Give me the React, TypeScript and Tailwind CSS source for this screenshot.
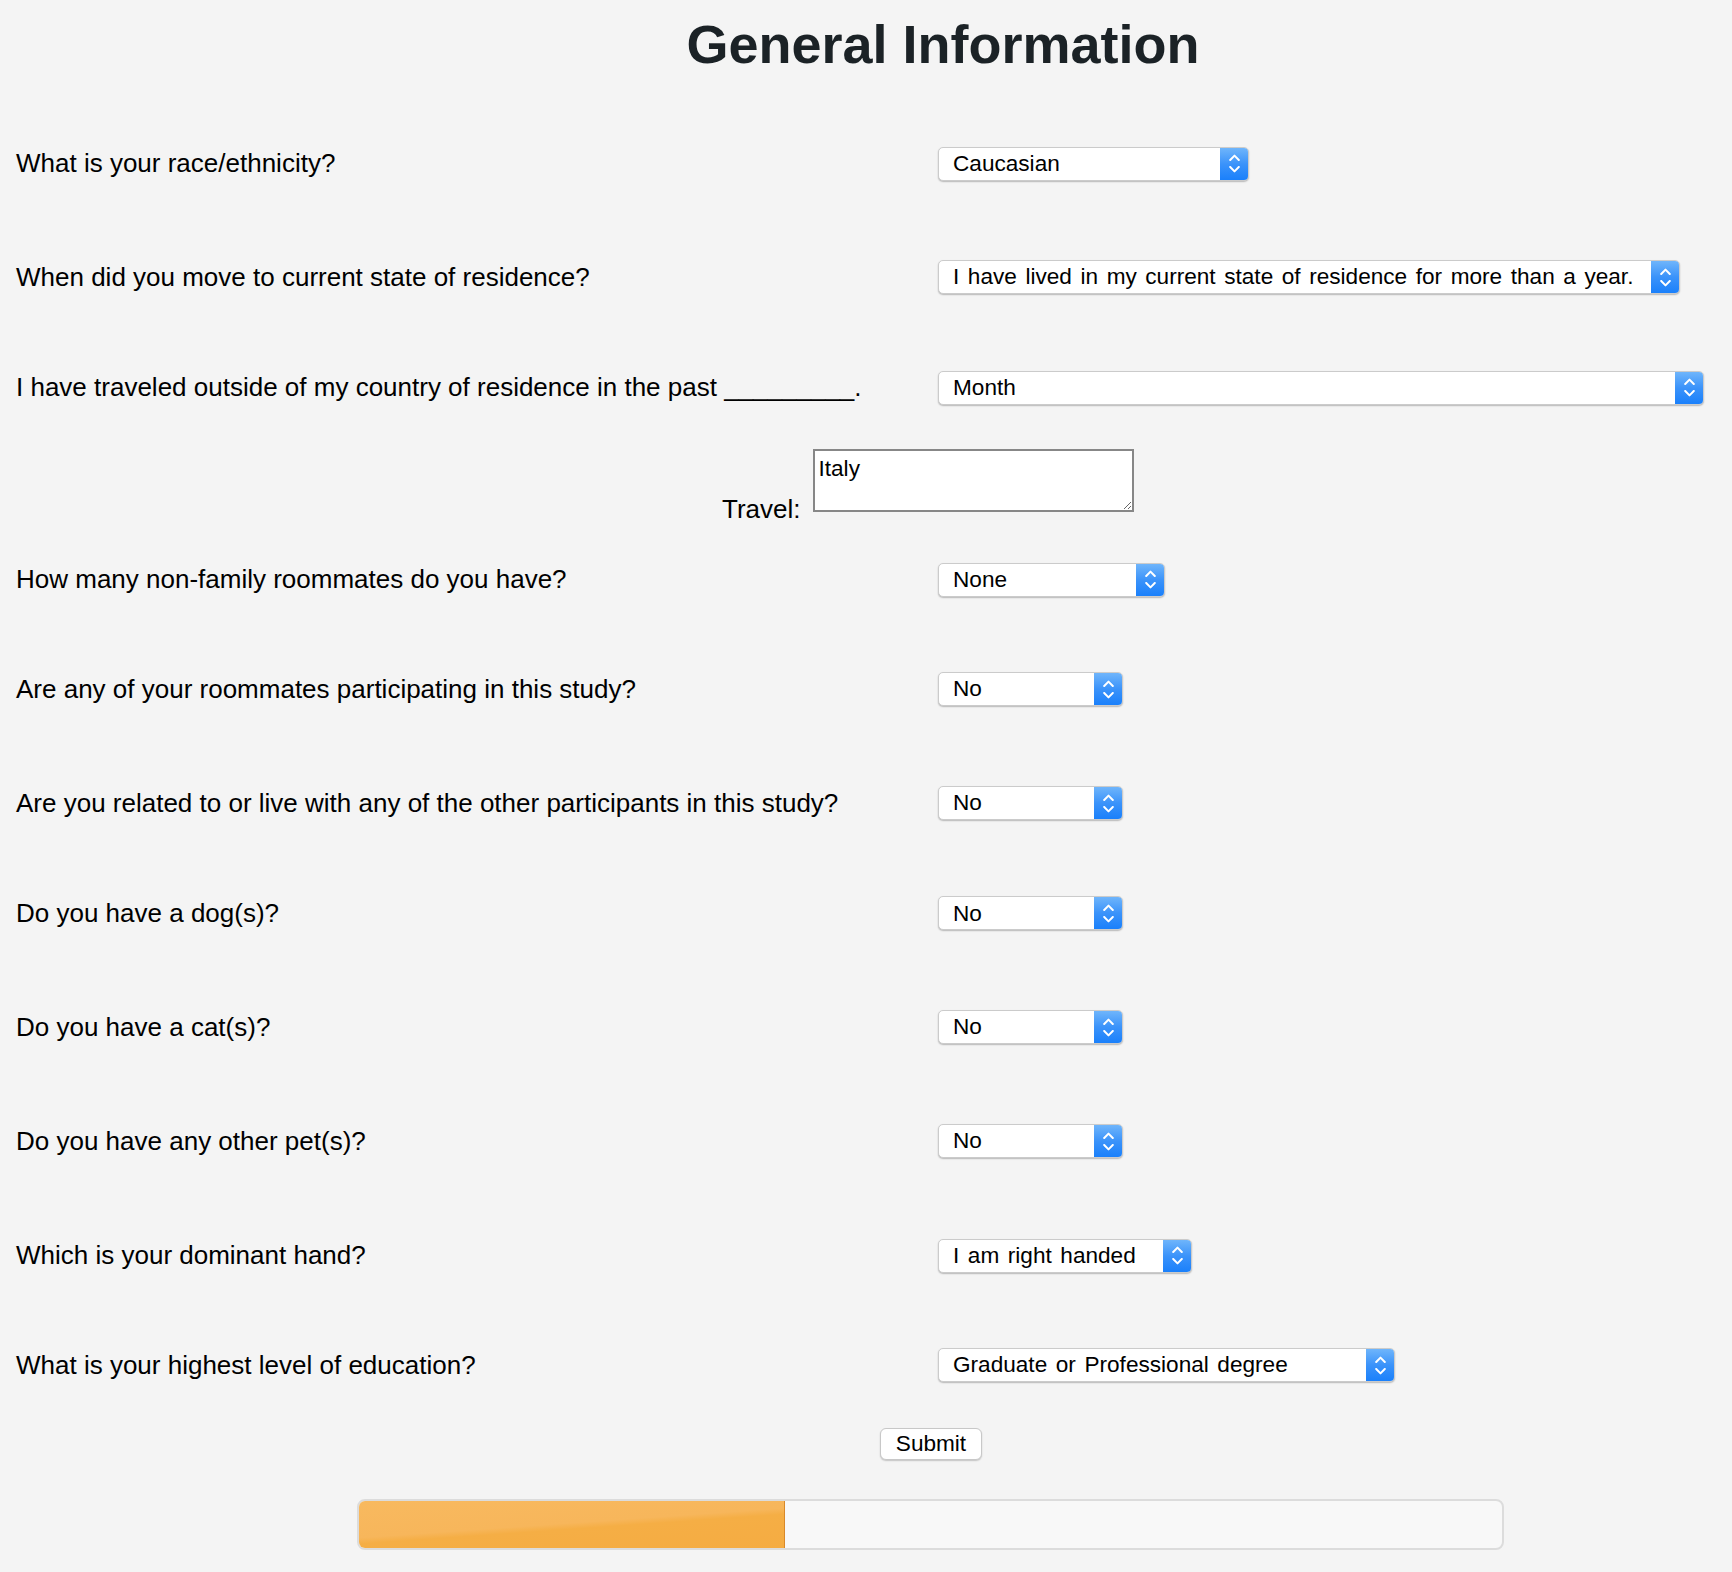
import React from 'react';

type Question = {
  label: string;
  value: string;
  width: string;
  gap: string;
};

const questions: Question[] = [
  { label: 'What is your race/ethnicity?', value: 'Caucasian', width: 'w-[311px]', gap: 'mt-0' },
  {
    label: 'When did you move to current state of residence?',
    value: 'I have lived in my current state of residence for more than a year.',
    width: 'w-[742px]',
    gap: 'mt-[53.8px]',
  },
  {
    label: 'I have traveled outside of my country of residence in the past _________.',
    value: 'Month',
    width: 'w-[766px]',
    gap: 'mt-[50.4px]',
  },
  { label: 'How many non-family roommates do you have?', value: 'None', width: 'w-[227px]', gap: 'mt-[25.9px]' },
  { label: 'Are any of your roommates participating in this study?', value: 'No', width: 'w-[185px]', gap: 'mt-[49.4px]' },
  {
    label: 'Are you related to or live with any of the other participants in this study?',
    value: 'No',
    width: 'w-[185px]',
    gap: 'mt-[53.8px]',
  },
  { label: 'Do you have a dog(s)?', value: 'No', width: 'w-[185px]', gap: 'mt-[50.4px]' },
  { label: 'Do you have a cat(s)?', value: 'No', width: 'w-[185px]', gap: 'mt-[53.8px]' },
  { label: 'Do you have any other pet(s)?', value: 'No', width: 'w-[185px]', gap: 'mt-[53.8px]' },
  { label: 'Which is your dominant hand?', value: 'I am right handed', width: 'w-[254px]', gap: 'mt-[54.9px]' },
  {
    label: 'What is your highest level of education?',
    value: 'Graduate or Professional degree',
    width: 'w-[457px]',
    gap: 'mt-[49.3px]',
  },
];

const progress = 0.373;

function FakeSelect({ value, width }: { value: string; width: string }) {
  return (
    <div
      className={`${width} h-[34px] flex bg-white rounded-[5px] border border-[#cbcbcb] shadow-[0_1px_1.5px_rgba(0,0,0,0.25)] overflow-hidden`}
    >
      <div className="flex-1 flex items-center pl-[14px] text-[22.6px] [word-spacing:2.3px] text-black whitespace-nowrap overflow-hidden">
        {value}
      </div>
      <div className="w-[28px] h-full flex flex-col items-center justify-center gap-[5px] bg-[linear-gradient(180deg,#6fb5fb_0%,#3b93fa_50%,#1a80fb_100%)]">
        <svg width="11" height="7" viewBox="0 0 11 7" fill="none">
          <path d="M1.2 6 L5.5 1.6 L9.8 6" stroke="white" strokeWidth="2" strokeLinecap="round" strokeLinejoin="round" />
        </svg>
        <svg width="11" height="7" viewBox="0 0 11 7" fill="none">
          <path d="M1.2 1 L5.5 5.4 L9.8 1" stroke="white" strokeWidth="2" strokeLinecap="round" strokeLinejoin="round" />
        </svg>
      </div>
    </div>
  );
}

function QuestionRow({ q }: { q: Question }) {
  return (
    <div className={`${q.gap} h-[60px] flex items-center pl-[16px]`}>
      <div className="w-[922px] shrink-0 text-[26px] text-black whitespace-nowrap">{q.label}</div>
      <FakeSelect value={q.value} width={q.width} />
    </div>
  );
}

export default function App() {
  return (
    <div
      className="w-[1732px] min-h-[1572px] bg-[#f4f4f4] text-black"
      style={{ fontFamily: '"Liberation Sans", Arial, Helvetica, sans-serif' }}
    >
      {/* Title */}
      <div className="h-[133.5px] pt-[17px] pl-[154px] text-center">
        <h1 className="text-[54px] font-bold leading-none text-[#1b2226]">General Information</h1>
      </div>

      {/* Questions */}
      {questions.slice(0, 3).map((q, i) => (
        <QuestionRow key={i} q={q} />
      ))}

      {/* Travel */}
      <div className="mt-[26.3px] h-[80px] flex items-start pl-[722px]">
        <label className="mt-[50px] text-[26px] leading-[30px] mr-[12px]">Travel:</label>
        <textarea
          defaultValue="Italy"
          className="mt-[5px] w-[321px] h-[63px] bg-white border-2 border-[#878787] px-[4px] pt-[5px] text-[22.6px] leading-[26px] text-black outline-none"
        />
      </div>

      {questions.slice(3).map((q, i) => (
        <QuestionRow key={i + 3} q={q} />
      ))}

      {/* Submit */}
      <div className="pt-[32.7px] pl-[130px] flex justify-center">
        <button className="w-[102px] h-[32px] bg-white border border-[#c8c8c8] rounded-[6px] shadow-[0_1px_1.5px_rgba(0,0,0,0.2)] text-[22.6px] text-black leading-none">
          Submit
        </button>
      </div>

      {/* Progress */}
      <div className="pt-[39px] pl-[357px]">
        <div className="w-[1147px] h-[51px] bg-[#f8f8f8] border-2 border-[#dcdcdc] rounded-[8px] overflow-hidden flex">
          <div
            className="h-full border-r border-[#d9892a] bg-[linear-gradient(176deg,#f8b95f_0%,#f7b65b_48%,#f5ae45_56%,#f5ac42_100%)]"
            style={{ width: `${progress * 100}%` }}
          />
        </div>
      </div>
    </div>
  );
}
